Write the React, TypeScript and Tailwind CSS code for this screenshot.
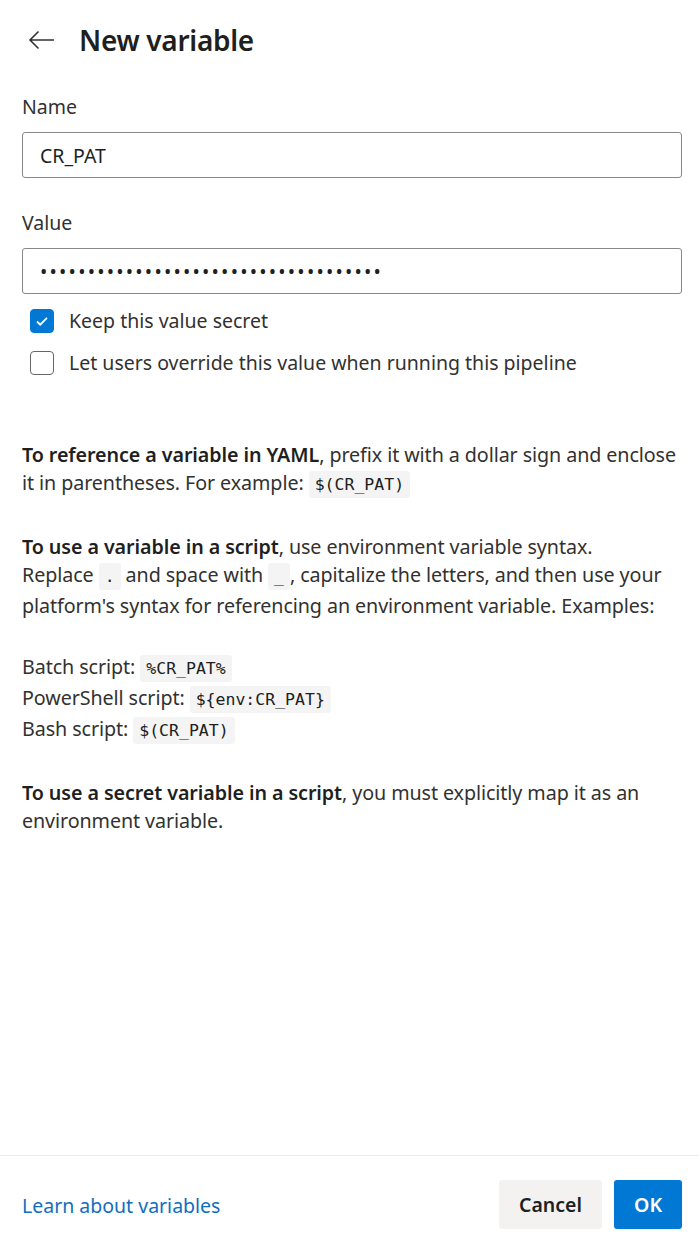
import { useState } from "react";

function Code({ children }: { children: React.ReactNode }) {
  return (
    <code className="my-[2px] inline-block rounded-[3px] bg-[#f4f4f4] px-[6px] font-['DejaVu_Sans_Mono',monospace] text-[16.5px] leading-[27px] tracking-normal text-[#202020]">
      {children}
    </code>
  );
}

function Check({ checked, onClick }: { checked: boolean; onClick: () => void }) {
  return (
    <button
      type="button"
      onClick={onClick}
      className={`flex h-6 w-6 items-center justify-center rounded-[4px] border ${
        checked ? "border-[#0078d4] bg-[#0078d4]" : "border-[#666] bg-white"
      }`}
    >
      {checked && (
        <svg width="16" height="16" viewBox="0 0 16 16" fill="none" stroke="white" strokeWidth="1.8">
          <path d="M3 8.5l3.2 3.2L13 4.8" />
        </svg>
      )}
    </button>
  );
}

export default function App() {
  const [secret, setSecret] = useState(true);
  const [override, setOverride] = useState(false);

  return (
    <div className="flex min-h-[1241px] flex-col bg-white font-['Noto_Sans',sans-serif] text-[#201f1e]">
      <div className="flex-1 pl-[22px] pr-[17px]">
        <div className="flex h-[80px] items-center gap-[24px] pl-[6px]">
          <svg width="27" height="20" viewBox="0 0 27 20" fill="none" stroke="#333" strokeWidth="1.6">
            <path d="M26 10H2M10.5 1.5L2 10l8.5 8.5" />
          </svg>
          <h1 className="text-[28px] font-semibold tracking-[-0.3px] text-[#201f1e]">New variable</h1>
        </div>

        <label className="mt-[13px] block text-[19.5px] leading-[28px] text-[#323130]">Name</label>
        <input
          defaultValue="CR_PAT"
          className="mt-[11px] h-[46px] w-full rounded-[3px] border border-[#8a8886] px-[17px] text-[19.5px] text-[#201f1e] outline-none"
        />

        <label className="mt-[31px] block text-[19.5px] leading-[28px] text-[#323130]">Value</label>
        <input
          type="password"
          defaultValue="000000000000000000000000000000000000"
          className="mt-[11px] h-[46px] w-full rounded-[3px] border border-[#8a8886] px-[17px] text-[19.5px] tracking-[2.2px] text-[#201f1e] outline-none"
        />

        <div className="mt-[15px] flex flex-col gap-[18px] pl-[8px]">
          <div className="flex h-6 items-center gap-[15px]">
            <Check checked={secret} onClick={() => setSecret((v) => !v)} />
            <span className="text-[19.5px] text-[#323130]">Keep this value secret</span>
          </div>
          <div className="flex h-6 items-center gap-[15px]">
            <Check checked={override} onClick={() => setOverride((v) => !v)} />
            <span className="text-[19.5px] text-[#323130]">Let users override this value when running this pipeline</span>
          </div>
        </div>

        <div className="mt-[66px] space-y-[33px] text-[19.7px] leading-[28px] tracking-[-0.08px] text-[#323130]">
          <p>
            <b className="font-semibold text-[#201f1e]">To reference a variable in YAML</b>, prefix it with a dollar
            sign and enclose it in parentheses. For example: <Code>$(CR_PAT)</Code>
          </p>
          <p>
            <b className="font-semibold text-[#201f1e]">To use a variable in a script</b>, use environment variable
            syntax.
            <br />
            Replace <Code>.</Code> and space with <Code>_</Code>, capitalize the letters, and then use your
            platform's syntax for referencing an environment variable. Examples:
          </p>
          <p>
            Batch script: <Code>%CR_PAT%</Code>
            <br />
            PowerShell script: <Code>{"${env:CR_PAT}"}</Code>
            <br />
            Bash script: <Code>$(CR_PAT)</Code>
          </p>
          <p>
            <b className="font-semibold text-[#201f1e]">To use a secret variable in a script</b>, you must explicitly
            map it as an environment variable.
          </p>
        </div>
      </div>

      <div className="flex h-[86px] items-start justify-between border-t border-[#edebe9] pl-[22px] pr-[17px] pt-[24px]">
        <a href="#" className="mt-[11px] text-[19.5px] text-[#106ebe]">
          Learn about variables
        </a>
        <div className="flex gap-[12px]">
          <button className="h-[49px] rounded-[3px] bg-[#f3f2f1] px-[20px] text-[19.5px] font-semibold text-[#201f1e]">
            Cancel
          </button>
          <button className="h-[49px] rounded-[3px] bg-[#0078d4] px-[20px] text-[19.5px] font-semibold text-white">
            OK
          </button>
        </div>
      </div>
    </div>
  );
}
